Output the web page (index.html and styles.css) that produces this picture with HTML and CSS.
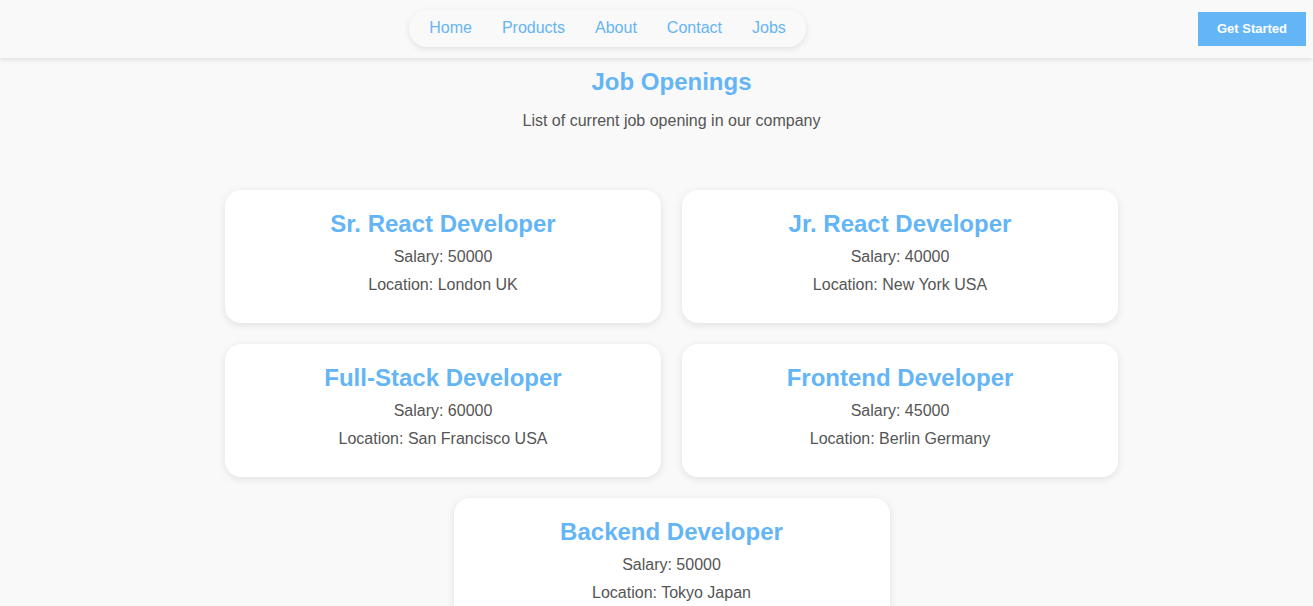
FILE: index.html
```html
<!DOCTYPE html>
<html lang="en">
<head>
<meta charset="utf-8">
<title>Job Openings</title>
<link rel="stylesheet" href="styles.css">
</head>
<body>
<header class="site-header">
  <div class="logo-slot"></div>
  <nav class="nav-pill">
    <a class="nav-link" href="#">Home</a>
    <a class="nav-link" href="#">Products</a>
    <a class="nav-link" href="#">About</a>
    <a class="nav-link" href="#">Contact</a>
    <a class="nav-link" href="#">Jobs</a>
  </nav>
  <button class="cta">Get Started</button>
</header>
<main class="jobs">
  <h1 class="jobs-title">Job Openings</h1>
  <p class="jobs-sub">List of current job opening in our company</p>
  <section class="job-list">
    <article class="job-card">
      <h2 class="job-name">Sr. React Developer</h2>
      <p class="job-line">Salary: 50000</p>
      <p class="job-line">Location: London UK</p>
    </article>
    <article class="job-card">
      <h2 class="job-name">Jr. React Developer</h2>
      <p class="job-line">Salary: 40000</p>
      <p class="job-line">Location: New York USA</p>
    </article>
    <article class="job-card">
      <h2 class="job-name">Full-Stack Developer</h2>
      <p class="job-line">Salary: 60000</p>
      <p class="job-line">Location: San Francisco USA</p>
    </article>
    <article class="job-card">
      <h2 class="job-name">Frontend Developer</h2>
      <p class="job-line">Salary: 45000</p>
      <p class="job-line">Location: Berlin Germany</p>
    </article>
    <article class="job-card">
      <h2 class="job-name">Backend Developer</h2>
      <p class="job-line">Salary: 50000</p>
      <p class="job-line">Location: Tokyo Japan</p>
    </article>
  </section>
</main>
</body>
</html>
```
FILE: styles.css
```css
* { box-sizing: border-box; }
html, body { margin: 0; padding: 0; }
body {
  background: #f9f9f9;
  font-family: "Liberation Sans", Arial, sans-serif;
  color: #555;
  overflow: hidden;
}
.site-header {
  height: 58px;
  display: flex;
  align-items: center;
  justify-content: space-between;
  padding: 0 7px 0 17px;
  background: #f9f9f9;
  box-shadow: 0 2px 4px rgba(0,0,0,0.1);
  position: relative;
  z-index: 1;
}
.logo-slot { width: 0; }
.nav-pill {
  display: flex;
  align-items: center;
  height: 37px;
  padding: 0 5px;
  border-radius: 18px;
  background: #f9f9f9;
  box-shadow: 0 2px 6px rgba(0,0,0,0.1);
  margin-top: -2px;
}
.nav-link {
  padding: 0 15px;
  font-size: 16px;
  color: #64b5f6;
  text-decoration: none;
}
.cta {
  border: 0;
  background: #64b5f6;
  color: #fff;
  font-family: "Liberation Sans", Arial, sans-serif;
  font-size: 13px;
  font-weight: bold;
  line-height: 14px;
  padding: 0;
  white-space: nowrap;
  width: 108px;
  height: 34px;
  margin-top: -1px;
}
.jobs {
  padding: 10px 0 0 30px;
  text-align: center;
}
.jobs-title {
  margin: 0;
  font-size: 24px;
  line-height: 28px;
  color: #64b5f6;
}
.jobs-sub {
  margin: 16px 0 0;
  font-size: 16px;
  line-height: 18px;
}
.job-list {
  display: flex;
  flex-wrap: wrap;
  justify-content: center;
  gap: 21px;
  width: 893px;
  margin: 60px auto 0;
}
.job-card {
  width: 436px;
  height: 133px;
  background: #fff;
  border-radius: 16px;
  box-shadow: 0 2px 8px rgba(0,0,0,0.1);
  padding: 20px 20px 30px;
}
.job-name {
  margin: 0 0 10px;
  font-size: 24px;
  line-height: 28px;
  color: #64b5f6;
}
.job-line {
  margin: 0 0 10px;
  font-size: 16px;
  line-height: 18px;
}
.job-line:last-child { margin-bottom: 0; }
```
